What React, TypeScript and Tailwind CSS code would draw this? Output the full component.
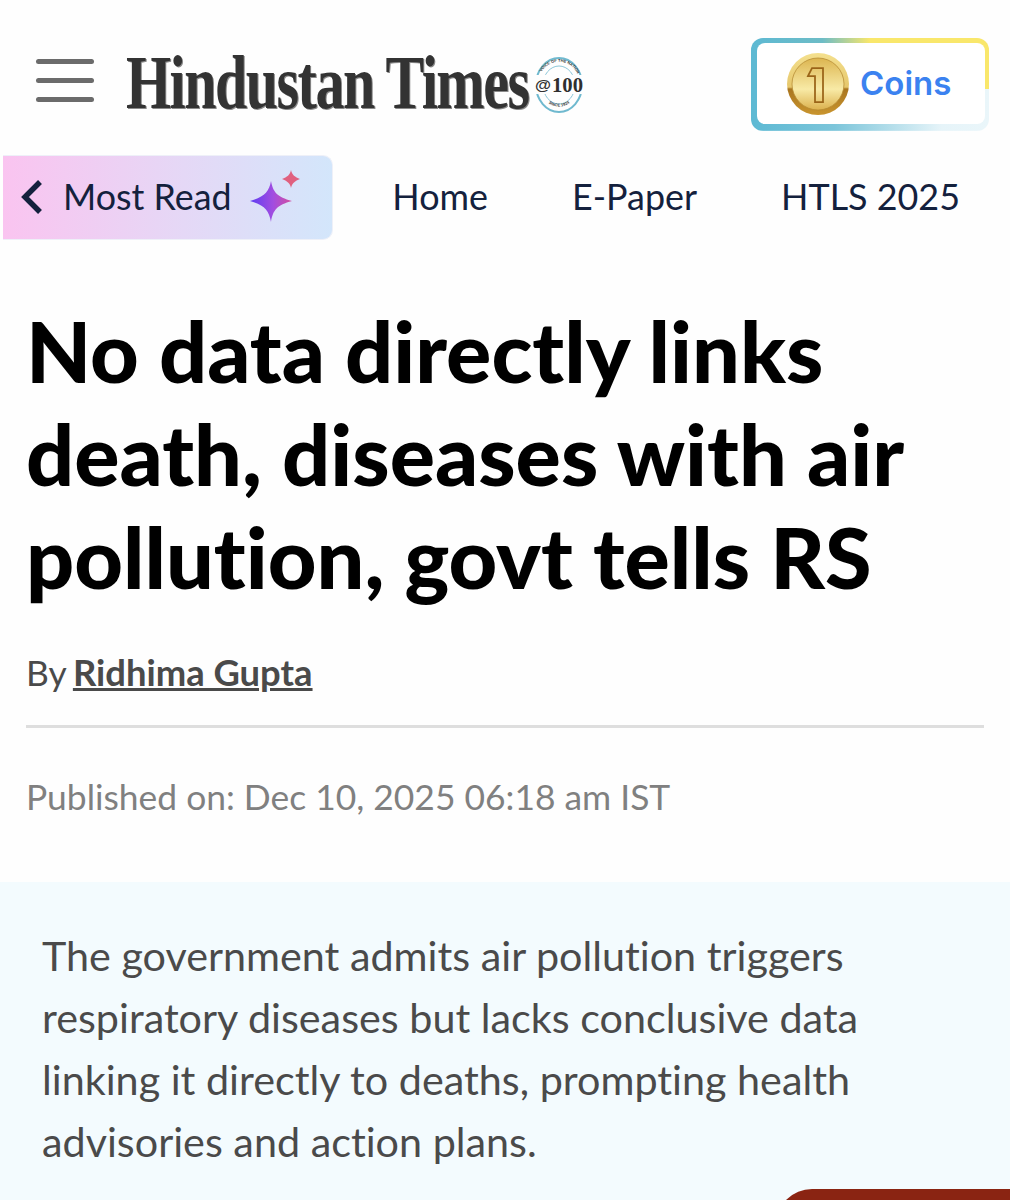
function MenuIcon() {
  return (
    <div className="-mt-[8px] flex w-[58px] shrink-0 flex-col gap-[14px]">
      <div className="h-[5px] rounded-full bg-[#6b6b6b]" />
      <div className="h-[5px] rounded-full bg-[#6b6b6b]" />
      <div className="h-[5px] rounded-full bg-[#6b6b6b]" />
    </div>
  );
}

function CentenaryBadge() {
  return (
    <svg width="52" height="60" viewBox="0 0 52 60" className="ml-[5px] shrink-0">
      <ellipse cx="26" cy="30" rx="23" ry="27" fill="none" stroke="#6fb9cf" strokeWidth="2" />
      <ellipse cx="26" cy="30" rx="16" ry="19" fill="none" stroke="#8cc7d9" strokeWidth="1" />
      <path id="hb-top" d="M8 18a20 20 0 0 1 36 0" fill="none" />
      <path id="hb-bottom" d="M14 47a18 18 0 0 0 24 0" fill="none" />
      <text fontSize="4" fontWeight="700" fill="#333" fontFamily="Liberation Sans, sans-serif">
        <textPath href="#hb-top" startOffset="1">VOICE OF THE NATION</textPath>
      </text>
      <text fontSize="4" fontWeight="700" fill="#333" fontFamily="Liberation Sans, sans-serif">
        <textPath href="#hb-bottom" startOffset="2">SINCE 1924</textPath>
      </text>
      <rect x="2" y="20" width="50" height="19" fill="#fefefe" />
      <text x="2" y="35" fontSize="14" fontWeight="700" fill="#333" fontFamily="Liberation Sans, sans-serif" textLength="16" lengthAdjust="spacingAndGlyphs">@</text>
      <text x="19" y="37" fontSize="22" fontWeight="700" fill="#2f2f2f" fontFamily="Liberation Serif, serif" textLength="31" lengthAdjust="spacingAndGlyphs">100</text>
    </svg>
  );
}

function CoinIcon() {
  return (
    <svg width="62" height="62" viewBox="0 0 62 62" className="shrink-0">
      <defs>
        <linearGradient id="coin-rim" x1="0" y1="0" x2="0" y2="1">
          <stop offset="0" stopColor="#f4e08e" />
          <stop offset="0.55" stopColor="#e6c76c" />
          <stop offset="0.58" stopColor="#a9751f" />
          <stop offset="1" stopColor="#c9952f" />
        </linearGradient>
        <linearGradient id="coin-face" x1="0" y1="0" x2="0" y2="1">
          <stop offset="0" stopColor="#dcb550" />
          <stop offset="0.6" stopColor="#f8eaa6" />
          <stop offset="1" stopColor="#dcb14e" />
        </linearGradient>
      </defs>
      <circle cx="31" cy="31" r="31" fill="url(#coin-rim)" />
      <circle cx="31" cy="31" r="26" fill="url(#coin-face)" stroke="#b48a32" strokeWidth="0.75" />
      <path d="M21 23l4-8h11v34h-8V23z" fill="none" stroke="#9a6418" strokeWidth="1.75" />
    </svg>
  );
}

function SparkleIcon() {
  return (
    <svg width="54" height="54" viewBox="0 0 54 54" className="shrink-0">
      <defs>
        <linearGradient id="spark-big" x1="0" y1="0.5" x2="1" y2="0.5">
          <stop offset="0" stopColor="#5f3df2" />
          <stop offset="0.55" stopColor="#a24de0" />
          <stop offset="1" stopColor="#d4509f" />
        </linearGradient>
      </defs>
      <path d="M21 11C23 22 27 27 42 31 27 35 23 40 21 52 19 40 14 35 0 31 14 27 19 22 21 11Z" fill="url(#spark-big)" />
      <path d="M41 0C42 5 45 7 50 9 45 11 42 13 41 18 40 13 37 11 32 9 37 7 40 5 41 0Z" fill="#e0607f" />
    </svg>
  );
}

export default function App() {
  return (
    <div className="relative h-[1200px] w-full overflow-hidden bg-[#fefefe] font-['Lato',sans-serif] [font-variant-ligatures:none]">
      {/* Header */}
      <header className="flex h-[154px] items-center pt-[15px] pl-[36px] pr-[21px]">
        <MenuIcon />
        <div className="ml-[32px] flex items-center">
          <span className="mb-[4px] inline-block origin-center scale-y-[1.3] whitespace-nowrap font-['Liberation_Serif',serif] text-[58px] font-bold leading-none tracking-[-1.5px] text-[#333] [text-shadow:1px_1px_0_#8a8a8a]">
            Hindustan Times
          </span>
          <CentenaryBadge />
        </div>
        <div className="ml-auto rounded-[12px] pt-[5px] pr-[4px] pb-[7px] pl-[6px] [background:linear-gradient(90deg,#5db9d3_0%,#6dbcc6_30%,#f9e76b_50%,#f9e76b_100%)_top/100%_55%_no-repeat,linear-gradient(90deg,#5db9d3_0%,#7cc5da_35%,#e6f4f9_80%,#eaf6fa_100%)_bottom/100%_45%_no-repeat]">
          <div className="flex h-[81px] w-[228px] items-center gap-[11px] rounded-[8px] bg-white pl-[30px]">
            <CoinIcon />
            <span className="font-['Inter',sans-serif] text-[33px] font-semibold text-[#3b82f0]">Coins</span>
          </div>
        </div>
      </header>

      {/* Nav */}
      <nav className="flex h-[86px] items-center pr-[50px]">
        <div className="ml-[3px] flex h-[85px] w-[330px] items-center rounded-r-[10px] border border-l-0 border-[#eef0f8] bg-[linear-gradient(90deg,#fac4f0_0%,#e5d8f6_55%,#d3e6fb_100%)] pl-[17px]">
          <svg width="24" height="36" viewBox="0 0 24 36" fill="none" className="shrink-0">
            <path d="M20 3L5 18l15 15" stroke="#14213d" strokeWidth="5.5" />
          </svg>
          <span className="ml-[19px] text-[35.8px] text-[#14213d]">Most Read</span>
          <div className="ml-[19px]"><SparkleIcon /></div>
        </div>
        <div className="ml-auto flex items-center gap-[84px] text-[35.9px] text-[#14213d]">
          <span>Home</span>
          <span>E-Paper</span>
          <span>HTLS 2025</span>
        </div>
      </nav>

      {/* Article head */}
      <div className="px-[26px]">
        <h1 className="mt-[59px] text-[84.5px] font-black leading-[103px] text-black">
          No data directly links death, diseases with air pollution, govt tells RS
        </h1>
        <p className="mt-[42px] text-[35.4px] leading-[44px] text-[#4a4a4a]">
          By <span className="-ml-[2px] text-[36.4px] font-bold underline">Ridhima Gupta</span>
        </p>
        <div className="mt-[30px] h-[3px] bg-[#dedede]" />
        <p className="mt-[47px] text-[35.4px] leading-[44px] text-[#808080]">
          Published on: Dec 10, 2025 06:18 am IST
        </p>
      </div>

      {/* Summary */}
      <div className="mt-[63px] bg-[#f3fbfe] pl-[42px] pr-[100px] pt-[42px] pb-[40px]">
        <p className="text-[41.3px] leading-[62px] text-[#4a4a4a]">
          The government admits air pollution triggers respiratory diseases but lacks conclusive data linking it directly to deaths, prompting health advisories and action plans.
        </p>
      </div>

      {/* Bottom floating bar */}
      <div className="absolute right-0 top-[1189px] h-[40px] w-[234px] rounded-tl-[36px] bg-[#8a2412]" />
    </div>
  );
}
